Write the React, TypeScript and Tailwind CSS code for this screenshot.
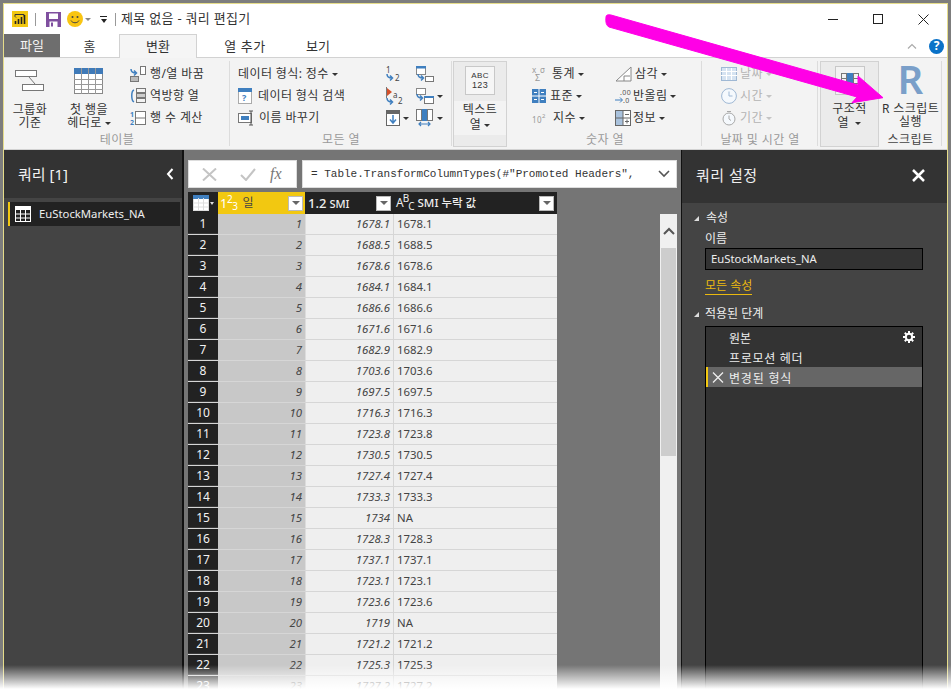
import type { ReactNode } from 'react';

const rows: [number, string, string][] = [
  [1, '1678.1', '1678.1'], [2, '1688.5', '1688.5'], [3, '1678.6', '1678.6'], [4, '1684.1', '1684.1'],
  [5, '1686.6', '1686.6'], [6, '1671.6', '1671.6'], [7, '1682.9', '1682.9'], [8, '1703.6', '1703.6'],
  [9, '1697.5', '1697.5'], [10, '1716.3', '1716.3'], [11, '1723.8', '1723.8'], [12, '1730.5', '1730.5'],
  [13, '1727.4', '1727.4'], [14, '1733.3', '1733.3'], [15, '1734', 'NA'], [16, '1728.3', '1728.3'],
  [17, '1737.1', '1737.1'], [18, '1723.1', '1723.1'], [19, '1723.6', '1723.6'], [20, '1719', 'NA'],
  [21, '1721.2', '1721.2'], [22, '1725.3', '1725.3'], [23, '1727.2', '1727.2'],
];

const BLUE = '#3f7fbf';

function Caret({ muted }: { muted?: boolean }) {
  return <span className={`ml-[3px] inline-block h-0 w-0 border-x-[3px] border-t-[3px] border-x-transparent align-middle ${muted ? 'border-t-[#c4c4c4]' : 'border-t-[#333]'}`} />;
}

function Ico({ children, w = 16, h = 16 }: { children: ReactNode; w?: number; h?: number }) {
  return <svg width={w} height={h} viewBox={`0 0 ${w} ${h}`} fill="none" className="shrink-0 overflow-visible">{children}</svg>;
}

function SmallRow({ icon, label, caret, muted, gap = 'gap-[4px]' }: { icon?: ReactNode; label: string; caret?: boolean; muted?: boolean; gap?: string }) {
  return (
    <div className={`flex h-[22px] items-center whitespace-nowrap ${gap} ${muted ? 'text-[#b4b4b4]' : 'text-[#333]'}`}>
      {icon}
      <span>{label}{caret && <Caret muted={muted} />}</span>
    </div>
  );
}

function Big({ icon, lines, caret, w, className = '' }: { icon: ReactNode; lines: string[]; caret?: boolean; w: number; className?: string }) {
  return (
    <div style={{ width: w }} className={`flex flex-col items-center text-[#333] ${className}`}>
      <div className="mb-[4px] flex h-[36px] items-center justify-center">{icon}</div>
      {lines.map((l, i) => (
        <div key={l} className="h-[13px] whitespace-nowrap text-center leading-[13px]">
          {l}{caret && i === lines.length - 1 && <Caret />}
        </div>
      ))}
    </div>
  );
}

function Group({ label, width, children, dark }: { label?: string; width: number; children: ReactNode; dark?: boolean }) {
  return (
    <div style={{ width }} className="relative flex shrink-0 flex-col">
      <div className="flex-1 pt-[2px]">{children}</div>
      <div className={`h-[17px] text-center leading-[15px] ${dark ? 'text-[#444]' : 'text-[#9a9a9a]'}`}>{label}</div>
      <div className="absolute top-0 right-0 bottom-[3px] w-px bg-[#dcdcdc]" />
    </div>
  );
}

function HeaderFilter() {
  return (
    <span className="flex h-[15px] w-[15px] shrink-0 items-center justify-center border border-[#bbb] bg-white">
      <span className="h-0 w-0 border-x-[4px] border-t-[4px] border-x-transparent border-t-[#666]" />
    </span>
  );
}

function Table16({ color = '#7a7a7a' }: { color?: string }) {
  return (
    <Ico w={16} h={16}>
      <rect x="0.5" y="0.5" width="15" height="15" fill={color === 'white' ? 'none' : '#fff'} stroke={color} />
      <rect x="0" y="0" width="16" height="4" fill={color === 'white' ? '#fff' : BLUE} />
      <path d="M0.5 8h15M0.5 12h15M5.5 3v13M10.5 3v13" stroke={color} />
    </Ico>
  );
}

function CurveArrow({ x = 1, y = 9 }: { x?: number; y?: number }) {
  return <path d={`M${x} ${y}c0 3 2 4 5 4m-2-2.500l2.500 2.500l-2.500 2.500`} stroke={BLUE} strokeWidth="1.500" />;
}

export default function App() {
  return (
    <div className="relative h-[689px] w-[951px] overflow-hidden bg-[#7d7d7d] pt-[3px] pr-[3px] pl-[3px] text-[12px] font-['Noto_Sans','Noto_Sans_CJK_KR',sans-serif] leading-none">
      <div className="flex h-[686px] flex-col border-t border-x border-[#e5dc8a] bg-white">
        {/* title bar */}
        <div className="flex h-[30px] shrink-0 items-center pl-[8px]">
          <svg width="16" height="16" viewBox="0 0 16 16" className="shrink-0">
            <rect width="16" height="16" fill="#f2c811" />
            <path d="M3 5.500V3.500h9v2M3 5.500l1 1" stroke="#333" fill="none" />
            <path d="M3.500 13v-3M6.500 13V8M9.500 13V6M12.500 13V4" stroke="#222" strokeWidth="1.600" />
          </svg>
          <span className="ml-[7px] h-[13px] w-px bg-[#999]" />
          <svg width="15" height="15" viewBox="0 0 15 15" className="ml-[10px]">
            <rect width="15" height="15" fill="#7f4f9f" />
            <rect x="3" y="1.500" width="9" height="5.500" fill="#fff" />
            <rect x="3.500" y="9.500" width="8" height="5.500" fill="#fff" />
            <rect x="5" y="10.500" width="2" height="4" fill="#7f4f9f" />
          </svg>
          <svg width="16" height="16" viewBox="0 0 16 16" className="ml-[6px]">
            <circle cx="8" cy="8" r="8" fill="#f9c512" />
            <circle cx="5.500" cy="6" r="1" fill="#444" /><circle cx="10.500" cy="6" r="1" fill="#444" />
            <path d="M4 9.500c1.500 3 6.500 3 8 0" stroke="#444" fill="none" />
          </svg>
          <span className="ml-[2px] h-0 w-0 border-x-[3px] border-t-[3px] border-x-transparent border-t-[#888]" />
          <span className="ml-[9px] flex flex-col items-center gap-[2px]">
            <span className="h-px w-[7px] bg-[#222]" />
            <span className="h-0 w-0 border-x-[3.500px] border-t-[4px] border-x-transparent border-t-[#222]" />
          </span>
          <span className="ml-[8px] h-[13px] w-px bg-[#999]" />
          <span className="ml-[5px] pb-[2px] text-[13px] tracking-[0.3px] text-[#333]">제목 없음 - 쿼리 편집기</span>
          <div className="ml-auto flex items-center">
            <span className="h-px w-[10px] bg-[#222]" />
            <span className="ml-[35px] h-[10px] w-[10px] border border-[#222]" />
            <svg width="11" height="11" viewBox="0 0 11 11" className="mr-[18px] ml-[35px]"><path d="M0.500 0.500l10 10M10.500 0.500l-10 10" stroke="#222" /></svg>
          </div>
        </div>

        {/* tabs */}
        <div className="relative z-10 -mb-px flex h-[24px] shrink-0 items-stretch text-[13px] text-[#333]">
          <div className="mb-px flex w-[56px] items-center justify-center bg-[#6e6e6e] text-[#f4f4f4]">파일</div>
          <div className="flex w-[59px] items-center justify-center">홈</div>
          <div className="flex w-[78px] items-center justify-center border-x border-t border-[#d2d2d2] bg-[#f5f5f5]">변환</div>
          <div className="flex w-[96px] items-center justify-center tracking-[0.5px]">열 추가</div>
          <div className="flex w-[50px] items-center justify-center">보기</div>
          <div className="ml-auto flex items-center pr-[3px]">
            <svg width="10" height="6" viewBox="0 0 10 6"><path d="M1 5.500l4-4 4 4" stroke="#aaa" strokeWidth="1.200" fill="none" /></svg>
            <span className="ml-[12px] flex h-[15px] w-[15px] items-center justify-center rounded-full bg-[#0a72c8] text-[12px] font-bold text-white">?</span>
          </div>
        </div>

        {/* ribbon */}
        <div className="flex h-[93px] shrink-0 border-y border-[#d2d2d2] bg-[#f3f3f3] pt-[3px] tracking-[0.4px]">
          <Group label="테이블" width={226}>
            <div className="flex">
              <Big w={44} className="ml-[4px]" lines={['그룹화', '기준']} icon={
                <Ico w={30} h={22}>
                  <rect x="0.500" y="0.500" width="21" height="6" fill="#fff" stroke="#777" />
                  <rect x="7.500" y="14.500" width="21" height="6" fill="#fff" stroke="#777" />
                  <path d="M14 7l6 7" stroke="#777" />
                </Ico>
              } />
              <Big w={46} className="ml-[14px]" caret lines={['첫 행을', '헤더로']} icon={
                <Ico w={30} h={26}>
                  <rect x="0.500" y="0.500" width="28" height="25" fill="#fff" stroke="#888" />
                  <rect x="0" y="0" width="29" height="6" fill="#3f7ab8" />
                  <path d="M0 11.500h29M0 16.500h29M0 21.500h29M7.500 0v26M14.500 0v26M21.500 0v26" stroke="#999" />
                </Ico>
              } />
              <div className="ml-[18px]">
                <SmallRow label="행/열 바꿈" icon={
                  <Ico><CurveArrow x={1} y={3} /><rect x="10.500" y="0.500" width="5" height="8" fill="#fff" stroke="#777" /><rect x="0.500" y="10.500" width="8" height="5" fill="#bbb" stroke="#777" /></Ico>
                } />
                <SmallRow label="역방향 열" icon={
                  <Ico><path d="M4 2C1 3 1 12 4 14" stroke={BLUE} strokeWidth="1.500" /><rect x="6.500" y="0.500" width="9" height="4" stroke="#777" /><rect x="6.500" y="5.500" width="9" height="4" fill="#ccc" stroke="#777" /><rect x="6.500" y="10.500" width="9" height="4" stroke="#777" /></Ico>
                } />
                <SmallRow label="행 수 계산" icon={
                  <Ico><text x="0" y="7" fontSize="7" fill={BLUE} fontWeight="700">1</text><text x="0" y="15" fontSize="7" fill={BLUE} fontWeight="700">2</text><rect x="5.500" y="1.500" width="10" height="13" fill="#fff" stroke="#777" /><path d="M5 8h10" stroke="#777" /></Ico>
                } />
              </div>
            </div>
          </Group>

          <Group label="모든 열" width={222}>
            <div className="flex">
              <div className="ml-[8px] w-[148px]">
                <SmallRow label="데이터 형식: 정수" caret />
                <SmallRow label="데이터 형식 검색" gap="gap-[6px]" icon={
                  <Ico w={14} h={16}><rect x="0.500" y="0.500" width="13" height="15" fill="#fff" stroke="#aaa" /><rect width="14" height="4" fill={BLUE} /><text x="4" y="13" fontSize="9" fill={BLUE} fontWeight="700">?</text></Ico>
                } />
                <SmallRow label="이름 바꾸기" gap="gap-[5px]" icon={
                  <Ico><rect x="0.500" y="3.500" width="13" height="9" fill="#fff" stroke="#777" /><rect x="3" y="6" width="8" height="4" fill={BLUE} /><path d="M13 1v14M11 1h4M11 15h4" stroke="#555" /></Ico>
                } />
              </div>
              <div className="w-[30px]">
                <div className="flex h-[22px] items-center"><Ico><text x="0" y="7" fontSize="8" fill="#444">1</text><CurveArrow x={1} y={8} /><text x="9" y="15" fontSize="8" fill="#444">2</text></Ico></div>
                <div className="flex h-[22px] items-center"><Ico w={18} h={18}><path d="M1 1l5 4-5 4z" fill="#d4502a" /><path d="M0.500 0v11" stroke="#777" /><text x="7" y="11" fontSize="8" fill="#444">a</text><text x="12" y="17" fontSize="8" fill="#444">2</text><CurveArrow x={1} y={11} /></Ico></div>
                <div className="flex h-[22px] items-center"><Ico w={14} h={16}><rect x="0.500" y="0.500" width="13" height="15" fill="#fff" stroke="#666" /><rect width="14" height="4" fill="#666" /><path d="M7 5v8M4 9.500l3 3.500 3-3.500" stroke={BLUE} strokeWidth="1.500" /></Ico><Caret /></div>
              </div>
              <div>
                <div className="flex h-[22px] items-center"><Ico w={18} h={16}><rect x="0.500" y="0.500" width="9" height="8" fill="#fff" stroke="#888" /><rect width="10" height="2.500" fill={BLUE} /><CurveArrow x={2} y={8} /><rect x="9.500" y="10.500" width="8" height="5" fill="#fff" stroke="#777" /></Ico></div>
                <div className="flex h-[22px] items-center"><Ico w={18} h={16}><rect x="0.500" y="0.500" width="9" height="6" fill="#fff" stroke="#888" /><CurveArrow x={1} y={6} /><rect x="8.500" y="8.500" width="9" height="7" fill="#fff" stroke="#777" /><rect x="8" y="8" width="10" height="2" fill={BLUE} /></Ico><Caret /></div>
                <div className="flex h-[22px] items-center"><Ico w={18} h={18}><rect x="0.500" y="0.500" width="5" height="11" fill="#fff" stroke="#777" /><rect x="6" y="0" width="5" height="12" fill={BLUE} /><rect x="11.500" y="0.500" width="5" height="11" fill="#fff" stroke="#777" /><path d="M3 15h11M5 13l-2 2 2 2M12 13l2 2-2 2" stroke={BLUE} strokeWidth="1.200" /></Ico><Caret /></div>
              </div>
            </div>
          </Group>

          <div className="mr-px mb-[2px] ml-px flex w-[54px] shrink-0 flex-col items-center border border-[#d2d2d2] bg-[#ebebeb]">
            <div className="mt-[4px] flex h-[29px] w-[30px] flex-col items-center justify-center border border-[#c8c8c8] bg-[#f6f6f6] font-['Liberation_Sans',sans-serif] text-[#333]">
              <span className="text-[8px] leading-[9px]">ABC</span>
              <span className="text-[9px] leading-[10px]">123</span>
            </div>
            <div className="mt-[6px] w-full bg-[#f3f3f3] pt-px pb-[3px] text-center leading-[15px] text-[#333]">텍스트<br />열<Caret /></div>
          </div>

          <Group label="숫자 열" width={194}>
            <div className="flex">
              <div className="ml-[24px] w-[83px]">
                <SmallRow label="통계" caret gap="gap-[4px]" icon={
                  <Ico><text x="0" y="7" fontSize="8" fill="#999">x</text><text x="8" y="7" fontSize="8" fill="#999">σ</text><text x="3" y="15" fontSize="9" fill="#999">Σ</text></Ico>
                } />
                <SmallRow label="표준" caret icon={
                  <Ico w={14} h={14}><rect width="14" height="14" fill="#3f7fbf" /><path d="M7 0v14M0 7h14" stroke="#fff" /><path d="M2 3.500h3M9 3.500h3M2 10.500h3M9 10.500h3" stroke="#fff" /></Ico>
                } />
                <SmallRow label="지수" caret gap="gap-[5px]" icon={
                  <Ico><text x="0" y="13" fontSize="8" fill="#999">10</text><text x="10" y="8" fontSize="6" fill="#999">2</text></Ico>
                } />
              </div>
              <div>
                <SmallRow label="삼각" caret gap="gap-[2px]" icon={
                  <Ico w={18} h={16}><path d="M1 15L16 1v14z" fill="#fff" stroke="#888" /><path d="M9 15v-5h6" stroke="#888" /></Ico>
                } />
                <SmallRow label="반올림" caret gap="gap-[3px]" icon={
                  <Ico w={15} h={16}><text x="5" y="7" fontSize="7" fill="#555">.00</text><text x="8" y="15" fontSize="7" fill="#555">.0</text><path d="M0 12h7M5 9.500l2.500 2.500-2.500 2.500" stroke={BLUE} /></Ico>
                } />
                <SmallRow label="정보" caret gap="gap-[2px]" icon={
                  <Ico w={16} h={16}><rect x="0.500" y="0.500" width="15" height="15" fill="#fff" stroke="#666" /><rect x="1" y="1" width="7" height="14" fill="#a9c2dd" /><path d="M8 0v16M0 8h16M10 4.500h4M10 11.500h4M12 9.500v4" stroke="#666" /></Ico>
                } />
              </div>
            </div>
          </Group>

          <Group label="날짜 및 시간 열" width={116}>
            <div className="ml-[19px]">
              <SmallRow muted label="날짜" caret gap="gap-[3px]" icon={
                <Ico><rect x="0.500" y="1.500" width="15" height="13" fill="#d6e3f1" stroke="#9fb8d4" /><path d="M0 5.500h16M0 9.500h16M5.500 2v12M10.500 2v12" stroke="#fff" /></Ico>
              } />
              <SmallRow muted label="시간" caret gap="gap-[3px]" icon={
                <Ico><circle cx="8" cy="8" r="7.400" fill="#f5f9fd" stroke="#9fb8d4" /><path d="M8 3.500V8h3.500" stroke="#9fb8d4" /></Ico>
              } />
              <SmallRow muted label="기간" caret gap="gap-[3px]" icon={
                <Ico><circle cx="8" cy="9" r="6" fill="#f5f9fd" stroke="#a8a8a8" /><path d="M6 1.500h4M8 5.500V9l2 1.500" stroke="#a8a8a8" /></Ico>
              } />
            </div>
          </Group>

          <div className="mb-[2px] ml-[2px] flex w-[59px] shrink-0 flex-col items-center border border-[#d2d2d2] bg-[#ebebeb] text-[#333]">
            <div className="mt-[4px] flex h-[29px] w-[30px] items-center justify-center border border-[#c8c8c8] bg-[#f3f3f3]">
              <Ico w={18} h={16}><rect x="0.500" y="0.500" width="5" height="15" stroke="#777" /><rect x="6" y="0" width="6" height="16" fill={BLUE} /><rect x="12.500" y="0.500" width="5" height="15" stroke="#777" /><path d="M0 5.500h6M0 10.500h6M12 5.500h6M12 10.500h6" stroke="#777" /></Ico>
            </div>
            <div className="mt-[7px] text-center leading-[14px]">구조적<br />열 <Caret /></div>
          </div>

          <Group label="스크립트" width={63} dark>
            <div className="flex flex-col items-center text-[#333]">
              <span className="-mt-[4px] h-[43px] text-[40px] leading-[40px] font-semibold text-[#7a9fc9]">R</span>
              <div className="text-center leading-[13px] whitespace-nowrap">R 스크립트<br />실행</div>
            </div>
          </Group>
        </div>

        {/* body */}
        <div className="flex min-h-0 flex-1 bg-[#757575]">
          <div className="w-[180px] shrink-0 border-r-2 border-[#111] bg-[#444]">
            <div className="flex h-[48px] items-center justify-between bg-[#333] pr-[8px] pl-[14px] text-[15px] text-[#f2f2f2]">
              <span>쿼리 [1]</span>
              <svg width="8" height="12" viewBox="0 0 8 12"><path d="M6.500 1L2 6l4.500 5" stroke="#fff" strokeWidth="2" fill="none" /></svg>
            </div>
            <div className="mt-[4px] ml-[4px] flex h-[24px] w-[172px] items-center gap-[8px] border-l-2 border-[#f2c811] bg-[#222] pl-[5px] text-[11.3px] text-[#eee]">
              <Table16 color="white" />
              <span>EuStockMarkets_NA</span>
            </div>
          </div>

          <div className="flex min-w-0 flex-1 flex-col pt-[10px] pr-[4px] pl-[4px]">
            <div className="flex h-[28px] shrink-0 gap-[5px]">
              <div className="flex w-[109px] items-center border border-[#ddd] bg-white pl-[13px]">
                <svg width="15" height="13" viewBox="0 0 15 13"><path d="M1 0.500l13 12M14 0.500l-13 12" stroke="#c4c4c4" strokeWidth="2" /></svg>
                <svg width="16" height="13" viewBox="0 0 16 13" className="ml-[23px]"><path d="M1 7l5 5L15 1" stroke="#c4c4c4" strokeWidth="2" fill="none" /></svg>
                <span className="ml-[14px] font-['Liberation_Serif',serif] text-[16px] text-[#777] italic">fx</span>
              </div>
              <div className="flex flex-1 items-center border border-[#ddd] bg-white pr-[6px] pl-[8px] font-['Liberation_Mono',monospace] text-[11px] whitespace-pre text-[#333]">
                <span>= Table.TransformColumnTypes(#&quot;Promoted Headers&quot;,</span>
                <svg width="12" height="8" viewBox="0 0 12 8" className="ml-auto"><path d="M1 1l5 5 5-5" stroke="#555" strokeWidth="1.600" fill="none" /></svg>
              </div>
            </div>

            <div className="mt-[4px] flex min-h-0 flex-1 justify-between">
              <div className="w-[369px] shrink-0">
                <div className="flex h-[22px] bg-[#222] text-[#eee]">
                  <div className="flex w-[30px] items-center pl-[5px]">
                    <Table16 color="#ddd" /><span className="ml-px h-0 w-0 border-x-[2.500px] border-t-[3px] border-x-transparent border-t-[#ddd]" />
                  </div>
                  <div className="flex w-[87px] items-center justify-between bg-[#f2c811] pr-[2px] pl-[2px] text-white">
                    <span className="flex items-center gap-[5px]"><span className="text-[13px] tracking-[-0.5px]">1<sup className="text-[10px]">2</sup><sub className="text-[10px]">3</sub></span><span className="text-[#444]">일</span></span>
                    <HeaderFilter />
                  </div>
                  <div className="ml-px flex w-[87px] items-center justify-between pr-[2px] pl-[2px]">
                    <span className="flex items-center gap-[3px]"><span className="text-[13px] font-medium">1.2</span><span className="text-[11px] font-medium">SMI</span></span>
                    <HeaderFilter />
                  </div>
                  <div className="ml-px flex flex-1 items-center justify-between pr-[3px] pl-[2px]">
                    <span className="flex items-center gap-[4px]"><span className="text-[12px] tracking-[-1px]">A<sup className="text-[10px]">B</sup><sub className="text-[10px]">C</sub></span><span className="text-[11.5px] font-medium">SMI 누락 값</span></span>
                    <HeaderFilter />
                  </div>
                </div>
                {rows.map(([n, a, b]) => (
                  <div key={n} className="flex h-[21px] border-b border-[#d6d6d6] text-[11.4px] text-[#444]">
                    <div className="flex w-[30px] items-center justify-center border-b border-[#3a3a3a] bg-[#222] text-[12px] text-[#f2f2f2]">{n}</div>
                    <div className="flex w-[88px] items-center justify-end border-r border-[#dcdcdc] bg-[#c8c8c8] pr-[3px] italic">{n}</div>
                    <div className="flex w-[88px] items-center justify-end border-r border-[#d6d6d6] bg-[#efefef] pr-[3px] italic">{a}</div>
                    <div className="flex flex-1 items-center bg-[#efefef] pl-[3px]">{b}</div>
                  </div>
                ))}
              </div>
              <div className="mt-[22px] flex w-[17px] shrink-0 flex-col items-center bg-[#f0f0f0]">
                <div className="flex h-[34px] items-center">
                  <svg width="12" height="8" viewBox="0 0 12 8"><path d="M1 7l5-5 5 5" stroke="#555" strokeWidth="2" fill="none" /></svg>
                </div>
                <div className="h-[208px] w-[15px] bg-[#cdcdcd]" />
              </div>
            </div>
          </div>

          <div className="w-[266px] shrink-0 border-l border-[#111] bg-[#444] text-[#eee]">
            <div className="flex h-[53px] items-center justify-between bg-[#333] pr-[22px] pb-[3px] pl-[14px] text-[15px]">
              <span className="tracking-[0.5px]">쿼리 설정</span>
              <svg width="13" height="13" viewBox="0 0 13 13"><path d="M1 1l11 11M12 1L1 12" stroke="#fff" strokeWidth="2.500" /></svg>
            </div>
            <div className="mt-[8px] flex h-[14px] items-center pl-[12px]">
              <span className="h-0 w-0 border-b-[5px] border-l-[5px] border-b-[#ddd] border-l-transparent" />
              <span className="ml-[7px]">속성</span>
            </div>
            <div className="mt-[7px] pl-[23px] leading-[14px]">이름</div>
            <div className="mt-[2px] ml-[23px] flex h-[22px] w-[218px] items-center border border-black bg-[#333] pb-px pl-[5px] text-[11.3px]">EuStockMarkets_NA</div>
            <div className="mt-[9px] ml-[23px] inline-block border-b border-[#eab90f] pb-px leading-[14px] text-[#eab90f]">모든 속성</div>
            <div className="mt-[12px] flex h-[14px] items-center pl-[12px]">
              <span className="h-0 w-0 border-b-[5px] border-l-[5px] border-b-[#ddd] border-l-transparent" />
              <span className="ml-[6px]">적용된 단계</span>
            </div>
            <div className="mt-[5px] ml-[23px] h-[400px] w-[218px] border border-black bg-[#333]">
              <div className="flex h-[20px] items-center justify-between pr-[7px] pl-[23px]">
                <span className="pt-[4px]">원본</span>
                <svg width="12" height="12" viewBox="0 0 12 12"><circle cx="6" cy="6" r="3.200" fill="none" stroke="#fff" strokeWidth="2" /><path d="M6 0v2.500M6 9.500V12M0 6h2.500M9.500 6H12M1.800 1.800l1.800 1.800M8.400 8.400l1.800 1.800M10.200 1.800L8.400 3.600M3.600 8.400l-1.800 1.800" stroke="#fff" strokeWidth="2" /></svg>
              </div>
              <div className="flex h-[20px] items-center pt-[3px] pl-[23px] tracking-[0.7px]">프로모션 헤더</div>
              <div className="flex h-[20px] items-center border-l-2 border-[#f2c811] bg-[#666] pl-[4px]">
                <svg width="12" height="11" viewBox="0 0 12 11"><path d="M1 0.500l10 10M11 0.500l-10 10" stroke="#eee" strokeWidth="1.300" /></svg>
                <span className="ml-[5px] pt-[3px] tracking-[0.8px]">변경된 형식</span>
              </div>
            </div>
          </div>
        </div>
      </div>

      {/* fade at the bottom of the screenshot */}
      <div className="pointer-events-none absolute right-0 bottom-0 left-0 h-[24px] bg-gradient-to-b from-transparent to-white" />

      {/* annotation arrow */}
      <svg className="pointer-events-none absolute top-0 left-0" width="951" height="120" viewBox="0 0 951 120">
        <path d="M606 17 Q606 14 611 15 L858 85 L858 76 L883 97.700 L852 102.700 L857 97 L609 27 Q605 25 606 17 Z" fill="#ff00e6" stroke="#ff00e6" strokeWidth="1" strokeLinejoin="round" />
      </svg>
    </div>
  );
}
